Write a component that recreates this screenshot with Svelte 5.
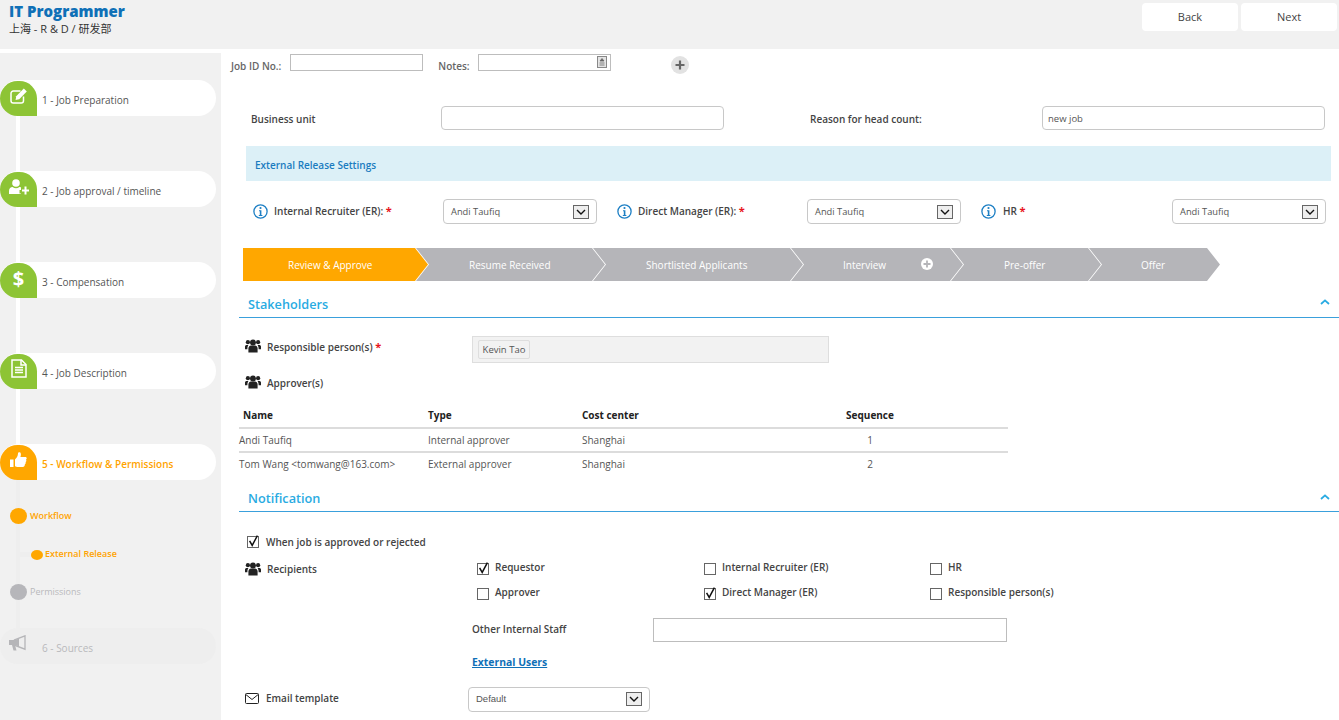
<script>
  const steps = [
    { n: '1 - Job Preparation', icon: 'edit' },
    { n: '2 - Job approval / timeline', icon: 'user' },
    { n: '3 - Compensation', icon: 'dollar' },
    { n: '4 - Job Description', icon: 'file' }
  ];
  const stages = [
    { t: 'Review & Approve', w: 185, p: 45, on: true },
    { t: 'Resume Received', w: 189, p: 53 },
    { t: 'Shortlisted Applicants', w: 210, p: 53 },
    { t: 'Interview', w: 172, p: 52, plus: true },
    { t: 'Pre-offer', w: 150, p: 53 },
    { t: 'Offer', w: 131, p: 52 }
  ];
  const people = [
    { name: 'Andi Taufiq', type: 'Internal approver', cost: 'Shanghai', seq: 1 },
    { name: 'Tom Wang <tomwang@163.com>', type: 'External approver', cost: 'Shanghai', seq: 2 }
  ];
  const selects = [
    { label: 'Internal Recruiter (ER):' },
    { label: 'Direct Manager (ER):' },
    { label: 'HR' }
  ];
  const recipients = [
    [{ t: 'Requestor', c: true }, { t: 'Internal Recruiter (ER)' }, { t: 'HR' }],
    [{ t: 'Approver' }, { t: 'Direct Manager (ER)', c: true }, { t: 'Responsible person(s)' }]
  ];
</script>

{#snippet users()}
  <svg class="users" viewBox="0 0 16 14" aria-hidden="true">
    <circle cx="8" cy="3.6" r="3" fill="#222" />
    <circle cx="2.9" cy="3.2" r="2.1" fill="#222" />
    <circle cx="13.1" cy="3.2" r="2.1" fill="#222" />
    <path d="M3.4 13.5V9.6c0-2 1.5-3 2.4-3h4.4c.9 0 2.4 1 2.4 3v3.9z" fill="#222" />
    <path d="M0 10.2V7.6c0-1 .8-1.7 1.6-1.7h1.8c-.5.9-1 1.9-1 3.5v.8zM16 10.2V7.6c0-1-.8-1.7-1.6-1.7h-1.8c.5.9 1 1.9 1 3.5v.8z" fill="#222" />
  </svg>
{/snippet}

{#snippet caret()}
  <svg class="caret" viewBox="0 0 10 6" aria-hidden="true"><path d="M1 5l4-3.6L9 5" fill="none" stroke="#29abe2" stroke-width="1.8" /></svg>
{/snippet}

{#snippet arrow()}
  <span class="arrow"><svg viewBox="0 0 10 6" aria-hidden="true"><path d="M1 1l4 4 4-4" fill="none" stroke="#111" stroke-width="1.4" /></svg></span>
{/snippet}

{#snippet check(on)}
  <span class="check">
    {#if on}<svg viewBox="0 0 12 12" aria-hidden="true"><path d="M2.6 5.8l2.6 4.6L10.4.6" fill="none" stroke="#111" stroke-width="1.5" /></svg>{/if}
  </span>
{/snippet}

{#snippet info()}
  <svg class="info" viewBox="0 0 15 15" aria-hidden="true">
    <circle cx="7.5" cy="7.5" r="6.6" fill="none" stroke="#1d7fc4" stroke-width="1.3" />
    <circle cx="7.5" cy="4" r="1.1" fill="#1d7fc4" />
    <path d="M6 6.2h2.4v4.7h1v1H5.8v-1h1V7.2H6z" fill="#1d7fc4" />
  </svg>
{/snippet}

<div class="page">
  <header class="top">
    <div class="title">
      <h1>IT Programmer</h1>
      <p>上海 - R &amp; D / 研发部</p>
    </div>
    <div class="actions">
      <button>Back</button>
      <button>Next</button>
    </div>
  </header>

  <div class="body">
    <aside class="side">
      {#each steps as s}
        <div class="step">
          <span class="badge">
            {#if s.icon === 'edit'}
              <svg viewBox="0 0 20 18" width="20" height="18" aria-hidden="true">
                <path d="M14.5 9.5v4.2a2.3 2.3 0 0 1-2.3 2.3H4.3A2.3 2.3 0 0 1 2 13.7V6.3A2.3 2.3 0 0 1 4.3 4h7.2" fill="none" stroke="#fff" stroke-width="1.5" />
                <path d="M7.2 9.2L14.8 1.6l3 3-7.6 7.6-3.6.8z" fill="#fff" />
              </svg>
            {:else if s.icon === 'user'}
              <svg viewBox="0 0 20 16" width="20" height="16" aria-hidden="true">
                <circle cx="7" cy="4" r="3.8" fill="#fff" />
                <path d="M0 15v-3c0-2.400 1.700-4 3.600-4 1 .8 2.100 1.200 3.400 1.200S9.400 8.800 10.400 8c.6 0 1.100.2 1.600.4V11h-1.500v3.500H12V15z" fill="#fff" />
                <path d="M15.500 7.500h2v3h2.500v2h-2.500v3h-2v-3H13v-2h2.500z" fill="#fff" />
              </svg>
            {:else if s.icon === 'dollar'}
              <span class="dollar">$</span>
            {:else}
              <svg viewBox="0 0 16 19" width="16" height="19" aria-hidden="true">
                <path d="M1 1h9.500L15 5.500V18H1z" fill="none" stroke="#fff" stroke-width="1.500" />
                <path d="M10 1v5h5" fill="none" stroke="#fff" stroke-width="1.500" />
                <path d="M4 8.500h8M4 11h8M4 13.500h8" stroke="#fff" stroke-width="1.500" />
              </svg>
            {/if}
          </span>
          <span class="step-name">{s.n}</span>
        </div>
        <div class="rail"></div>
      {/each}

      <div class="step current">
        <span class="badge">
          <svg viewBox="0 0 17 16" width="17" height="16" aria-hidden="true">
            <path d="M0 7.500h3.500V15H0z" fill="#fff" />
            <path d="M5 7.500c1.500-1.500 3-3.500 3-6C8 .5 9 0 9.800.3c1.200.5 1.400 2.500.6 4.700h4.800c1.800 0 1.900 2 .8 2.600.6.900.4 2-.4 2.500.4 1 0 1.900-.8 2.300.2 1.300-.6 2.600-2 2.600H8c-1.200 0-2-.6-3-.8z" fill="#fff" />
          </svg>
        </span>
        <span class="step-name">5 - Workflow &amp; Permissions</span>
      </div>
      <div class="rail faint">
        <div class="sub on first"><i></i><span>Workflow</span></div>
        <div class="sub on nested"><b></b><i></i><span>External Release</span></div>
        <div class="sub off"><i></i><span>Permissions</span></div>
      </div>
      <div class="step disabled">
        <span class="horn">
          <svg viewBox="0 0 18 16" width="18" height="16" aria-hidden="true">
            <path d="M0 5h5v5H0zM3 10h3l1.500 5.500H4.500z" fill="#b5b5b8" />
            <path d="M5.500 4.800L16 .8v13.400L5.500 10.200z" fill="none" stroke="#b5b5b8" stroke-width="1.300" />
            <path d="M6 5l4-1.500v8L6 10z" fill="#b5b5b8" />
          </svg>
        </span>
        <span class="step-name">6 - Sources</span>
      </div>
    </aside>

    <main class="main">
      <div class="idrow">
        <span class="id-label">Job ID No.:</span>
        <span class="flat id-a"></span>
        <span class="id-label notes">Notes:</span>
        <span class="flat id-b">
          <svg viewBox="0 0 10 12" width="10" height="12" aria-hidden="true">
            <rect x=".5" y=".5" width="9" height="11" fill="#e4e4e4" stroke="#888" />
            <path d="M5 2.500L7 5H3zM2.500 7h5M2.500 9h5" fill="#666" stroke="#666" stroke-width=".8" />
          </svg>
        </span>
        <span class="addbtn">
          <svg viewBox="0 0 10 10" width="10" height="10" aria-hidden="true"><path d="M5 .5v9M.5 5h9" stroke="#666" stroke-width="2.200" /></svg>
        </span>
      </div>

      <div class="unitrow">
        <span class="semi unit-a">Business unit</span>
        <span class="box unit-input"></span>
        <span class="semi unit-b">Reason for head count:</span>
        <span class="box unit-input text">new job</span>
      </div>

      <div class="banner">External Release Settings</div>

      <div class="selects">
        {#each selects as s}
          <div class="sel-cell">
            {@render info()}
            <span class="semi sel-label">{s.label} <em>*</em></span>
            <span class="box sel">Andi Taufiq{@render arrow()}</span>
          </div>
        {/each}
      </div>

      <div class="stages">
        {#each stages as st}
          <div class="stage" class:on={st.on} style="width:{st.w}px;padding-left:{st.p}px">
            {st.t}
            {#if st.plus}
              <svg class="stage-plus" viewBox="0 0 12 12" aria-hidden="true">
                <circle cx="6" cy="6" r="6" fill="#fff" />
                <path d="M6 2.500v7M2.500 6h7" stroke="#b5b5b9" stroke-width="1.800" />
              </svg>
            {/if}
          </div>
        {/each}
      </div>

      <div class="section s1"><h2>Stakeholders</h2>{@render caret()}</div>

      <div class="resp">
        {@render users()}
        <span class="semi resp-label">Responsible person(s) <em>*</em></span>
        <div class="tagbox"><span class="tag">Kevin Tao</span></div>
      </div>
      <div class="appr">
        {@render users()}
        <span class="semi resp-label">Approver(s)</span>
      </div>

      <table>
        <thead>
          <tr><th class="c1 pad">Name</th><th class="c2">Type</th><th class="c3">Cost center</th><th class="c4">Sequence</th></tr>
        </thead>
        <tbody>
          {#each people as p}
            <tr><td class="c1">{p.name}</td><td class="c2">{p.type}</td><td class="c3">{p.cost}</td><td class="c4">{p.seq}</td></tr>
          {/each}
        </tbody>
      </table>

      <div class="section s2"><h2>Notification</h2>{@render caret()}</div>

      <div class="when">
        {@render check(true)}
        <span class="semi">When job is approved or rejected</span>
      </div>

      <div class="recip">
        <div class="recip-head">
          {@render users()}
          <span class="semi">Recipients</span>
        </div>
        <div class="recip-grid">
          {#each recipients as row}
            {#each row as r}
              <label class="opt">{@render check(r.c)}<span class="semi">{r.t}</span></label>
            {/each}
          {/each}
        </div>
      </div>

      <div class="other">
        <span class="semi">Other Internal Staff</span>
        <span class="flat other-input"></span>
      </div>

      <a class="ext" href="#ext">External Users</a>

      <div class="email">
        <svg class="mail" viewBox="0 0 14 11" aria-hidden="true">
          <rect x=".5" y=".5" width="13" height="10" rx="1" fill="none" stroke="#222" />
          <path d="M.8 1.500L7 6.500l6.200-5" fill="none" stroke="#222" />
        </svg>
        <span class="semi">Email template</span>
        <span class="box email-sel">Default{@render arrow()}</span>
      </div>
    </main>
  </div>
</div>

<style>
  :global(body) {
    margin: 0;
    background: #fff;
    font-family: "Open Sans", "Noto Sans CJK SC", sans-serif;
    font-size: 10px;
    color: #444;
  }
  .page { width: 1339px; height: 720px; overflow: hidden; display: flex; flex-direction: column; }
  .top { height: 49px; flex: none; background: #f1f1f1; display: flex; justify-content: space-between; }
  .title { padding: 2px 0 0 9px; }
  h1 { margin: 0; font-size: 15px; line-height: 18px; font-weight: 800; color: #0f70b7; }
  .title p { margin: 2px 0 0; font-size: 11px; line-height: 14px; color: #333; }
  .actions { display: flex; gap: 3px; padding: 3px 2px 0 0; }
  button {
    width: 96px; height: 28px; border: 0; border-radius: 4px; background: #fff; color: #444;
    font: 400 11px "Open Sans", sans-serif; padding: 0 0 2px;
  }
  .body { flex: 1; display: flex; margin-top: 4px; min-height: 0; }
  .side { width: 221px; flex: none; background: #f1f1f1; padding-top: 27px; box-sizing: border-box; }
  .step { width: 216px; height: 36px; border-radius: 18px; background: #fff; display: flex; align-items: flex-end; position: relative; }
  .badge {
    width: 37px; height: 35px; flex: none; background: #8dc435; border-radius: 18px 18px 0 18px;
    display: flex; align-items: center; justify-content: center; padding-bottom: 6px; box-sizing: border-box;
  }
  .dollar { color: #fff; font: 700 20px/1 "Open Sans", sans-serif; margin-top: 2px; }
  .step-name { font-size: 10px; line-height: 12px; padding: 0 0 10px 5px; color: #555; }
  .current .badge { background: #ffa700; }
  .current .step-name { color: #ffa300; font-weight: 600; }
  .disabled { background: #eeeeee; }
  .disabled .step-name { color: #b9b9bc; padding-left: 15px; }
  .horn { width: 27px; padding: 7px 0 0 9px; box-sizing: border-box; display: flex; height: 36px; }
  .rail { width: 4px; height: 55px; margin-left: 16px; background: #fff; }
  .rail.faint { height: 148px; background: #eeeeee; position: relative; padding-top: 27px; box-sizing: border-box; }
  .sub { display: flex; align-items: center; height: 17px; margin-bottom: 21px; position: relative; font-size: 9px; white-space: nowrap; }
  .sub i { width: 17px; height: 16px; border-radius: 50%; flex: none; margin-left: -6px; position: relative; }
  .sub span { padding-left: 3px; }
  .sub.on i { background: #ffa700; }
  .sub.on span { color: #ffa300; font-weight: 600; }
  .sub.off i { background: #b6b6ba; }
  .sub.off span { color: #b9b9bc; }
  .sub.nested i { width: 12px; height: 10px; margin-left: 15px; margin-top: 2px; }
  .sub.nested span { padding-left: 2px; }
  .sub.nested b { position: absolute; left: 4px; top: 7px; width: 13px; height: 5px; background: #eeeeee; }

  .main { flex: 1; position: relative; min-width: 0; }
  .idrow { display: flex; align-items: flex-start; height: 18px; margin-top: 1px; padding-left: 10px; }
  .id-label { font-weight: 600; color: #666; font-size: 10px; line-height: 12px; padding-top: 6px; }
  .flat { border: 1px solid #bdbdbd; box-sizing: border-box; background: #fff; display: block; }
  .id-a { width: 133px; height: 17px; margin-left: 9px; }
  .notes { margin-left: 15px; }
  .id-b { width: 133px; height: 17px; margin-left: 8px; display: flex; justify-content: flex-end; padding: 1px 3px; }
  .addbtn { width: 18px; height: 18px; border-radius: 50%; background: #e2e2e2; margin: 2px 0 0 60px; display: flex; align-items: center; justify-content: center; }
  .semi { font-weight: 600; color: #444; font-size: 10px; line-height: 12px; white-space: nowrap; }
  em { color: #e8141c; font-style: normal; font-weight: 700; font-size: 11px; line-height: 10px; }
  .unitrow { display: flex; align-items: center; margin-top: 34px; height: 24px; padding-left: 30px; }
  .box { border: 1px solid #c8c8c8; border-radius: 4px; box-sizing: border-box; background: #fff; display: flex; align-items: center; }
  .unit-a { width: 190px; padding-top: 2px; }
  .unit-input { width: 283px; height: 24px; }
  .unit-input.text { padding: 1px 0 0 5px; font-size: 9.5px; color: #555; }
  .unit-b { width: 232px; margin-left: 86px; padding-top: 2px; }
  .banner {
    margin: 16px 8px 0 25px; height: 35px; background: #dcf0f7; color: #1a7cc0; font-weight: 600;
    font-size: 10px; line-height: 38px; padding-left: 9px;
  }
  .selects { display: flex; margin-top: 18px; padding-left: 32px; height: 25px; }
  .sel-cell { display: flex; align-items: center; width: 364px; position: relative; }
  .sel-cell:last-child .sel { margin-left: auto; }
  .sel-cell:last-child { width: 345px; }
  .info { width: 15px; height: 15px; flex: none; margin-right: 6px; }
  .sel-label { width: 169px; margin-top: -2px; }
  .sel-cell:last-child .sel-label { width: auto; margin-left: 1px; }
  .sel { width: 154px; height: 25px; padding: 0 7px 0 7px; font-size: 9.3px; color: #555; justify-content: space-between; flex: none; }
  .arrow { width: 16px; height: 14px; border: 1px solid #666; background: #eee; box-sizing: border-box; display: flex; align-items: center; justify-content: center; }
  .arrow svg { width: 10px; height: 6px; }
  .stages { display: flex; margin: 24px 0 0 22px; height: 33px; }
  .stage {
    height: 33px; flex: none; box-sizing: border-box; background: #b5b5b9; color: #fff; font-size: 10px; line-height: 35px;
    margin-left: -12px; position: relative;
    clip-path: polygon(0 0, calc(100% - 13px) 0, 100% 50%, calc(100% - 13px) 100%, 0 100%, 13px 50%);
  }
  .stage:first-child { margin-left: 0; clip-path: polygon(0 0, calc(100% - 13px) 0, 100% 50%, calc(100% - 13px) 100%, 0 100%); }
  .stage.on { background: #ffa700; }
  .stage-plus { position: absolute; width: 12px; height: 12px; top: 10px; left: 130px; }
  .section { margin: 0 0 0 18px; border-bottom: 1px solid #3aa0dc; position: relative; box-sizing: border-box; }
  .s1 { margin-top: 14px; height: 23px; }
  .s2 { margin-top: 11px; height: 24px; }
  h2 { margin: 0; padding-left: 9px; font-size: 12.7px; line-height: 18px; font-weight: 600; color: #29abe2; }
  .s2 h2 { padding-top: 1px; }
  .caret { position: absolute; width: 10px; height: 6px; right: 9px; top: 4px; }
  .s2 .caret { top: 6px; }
  .users { width: 16px; height: 14px; flex: none; }
  .resp { display: flex; align-items: flex-start; height: 27px; margin: 18px 0 0 24px; }
  .resp .users { margin-top: 3px; }
  .resp-label { padding: 5px 0 0 6px; width: 211px; box-sizing: border-box; }
  .tagbox { width: 357px; height: 27px; background: #f2f2f2; border: 1px solid #dedede; box-sizing: border-box; padding: 3px 0 0 5px; }
  .tag { display: block; width: 52px; height: 19px; border: 1px solid #dedede; border-radius: 2px; box-sizing: border-box; font-size: 9.5px; line-height: 18px; text-align: center; color: #555; }
  .appr { display: flex; align-items: flex-start; margin: 12px 0 0 24px; height: 27px; }
  .appr .resp-label { padding-top: 2px; }
  table { border-collapse: collapse; margin: 0 0 0 18px; width: 769px; table-layout: fixed; font-size: 10px; }
  th { font-weight: 700; color: #222; text-align: left; height: 26px; padding: 0 0 5px; border-bottom: 2px solid #dcdcdc; box-sizing: border-box; font-size: 10px; vertical-align: bottom; line-height: 14px;  }
  td { padding: 0; height: 24px; color: #555; border-bottom: 2px solid #dcdcdc; box-sizing: border-box; }
  tbody tr:last-child td { border-bottom-color: transparent; }
  .c1 { width: 189px; }
  .pad { padding-left: 4px; }
  .c2 { width: 154px; }
  .c3 { width: 222px; }
  th.c4, td.c4 { text-align: center; width: 204px; padding-right: 72px; }
  .when { display: flex; align-items: center; gap: 7px; margin: 23px 0 0 26px; height: 14px; }
  .check { width: 12px; height: 12px; border: 1px solid #666; box-sizing: border-box; background: #fff; display: block; flex: none; position: relative; }
  .check svg { position: absolute; left: -1px; top: -2px; width: 12px; height: 12px; }
  .recip { display: flex; margin: 12px 0 0 24px; }
  .recip-head { width: 232px; display: flex; align-items: flex-start; height: 14px; gap: 6px; padding-top: 1px; flex: none; }
  .recip-head .semi { padding-top: 1px; }
  .recip-grid { display: grid; grid-template-columns: 227px 226px auto; grid-auto-rows: 25px; justify-content: start; }
  .opt { display: flex; align-items: center; gap: 6px; height: 14px; }
  .opt .check { margin-top: 2px; }
  .opt .semi { margin-bottom: 3px; }
  .other { display: flex; align-items: center; margin: 7px 0 0 251px; height: 24px; }
  .other .semi { width: 181px; margin-top: -2px; }
  .other-input { width: 354px; height: 24px; }
  .ext { display: block; margin: 14px 0 0 251px; font-weight: 700; font-size: 10.4px; line-height: 13px; color: #0f70b7; text-decoration: underline; }
  .email { display: flex; align-items: center; margin: 18px 0 0 24px; height: 25px; }
  .mail { width: 14px; height: 11px; flex: none; margin: -2px 7px 0 0; }
  .email .semi { width: 202px; margin-top: -4px; }
  .email-sel { width: 182px; height: 25px; padding: 0 7px 2px 7px; font: 9.5px "Liberation Sans", sans-serif; color: #555; justify-content: space-between; }
</style>
